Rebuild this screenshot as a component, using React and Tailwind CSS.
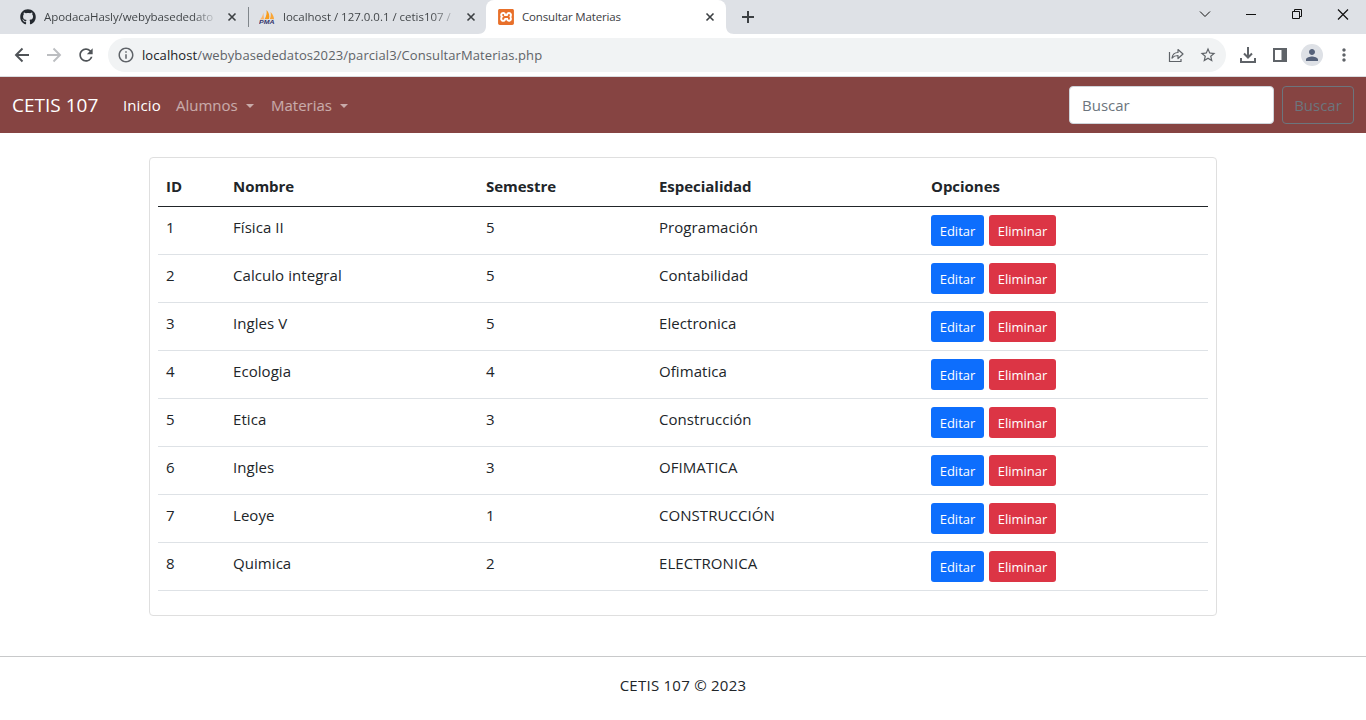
import React from "react";
import { FaGithub } from "react-icons/fa";
import { MdInfoOutline, MdRefresh, MdStarBorder, MdPerson, MdMoreVert } from "react-icons/md";
import { SiXampp } from "react-icons/si";

const rows = [
  ["1", "Física II", "5", "Programación"],
  ["2", "Calculo integral", "5", "Contabilidad"],
  ["3", "Ingles V", "5", "Electronica"],
  ["4", "Ecologia", "4", "Ofimatica"],
  ["5", "Etica", "3", "Construcción"],
  ["6", "Ingles", "3", "OFIMATICA"],
  ["7", "Leoye", "1", "CONSTRUCCIÓN"],
  ["8", "Quimica", "2", "ELECTRONICA"],
];

function CloseX() {
  return (
    <svg className="size-4 shrink-0 text-[#3c4043]" viewBox="0 0 16 16" fill="none" stroke="currentColor" strokeWidth="1.6">
      <path d="M4.5 4.5l7 7M11.5 4.5l-7 7" />
    </svg>
  );
}

function PmaIcon() {
  return (
    <svg className="size-4 shrink-0" viewBox="0 0 16 16">
      <path d="M1 10.5C3 8.500 4 6 4.300 3.500L5 10.300z" fill="#fbb56a" />
      <path d="M5.500 10.300C7.500 7 8 4 7.500 1C10 3.500 11 7 10 10z" fill="#f89c1c" />
      <path d="M10.800 10C12 7.500 12 5 11.500 3C14 5.500 15 8 15 10.300z" fill="#f9a638" />
      <text x="0" y="15.200" fontFamily="Liberation Sans, sans-serif" fontSize="5.500" fontWeight="700" fontStyle="italic" textLength="15.500" lengthAdjust="spacingAndGlyphs" fill="#33336b">PMA</text>
    </svg>
  );
}

function TabStrip() {
  return (
    <div className="flex h-[34px] items-center bg-[#dee1e6] text-[11.500px] text-[#3c4043]">
      <div className="flex w-[248px] items-center pl-5">
        <FaGithub className="size-4 shrink-0 text-[#24292f]" />
        <div className="ml-2 w-[171px] whitespace-nowrap tracking-[-0.080px]">
          <span className="bg-linear-to-r from-[#3c4043] from-88% to-[#3c4043]/20 bg-clip-text text-transparent">ApodacaHasly/webybasededato</span>
        </div>
        <div className="ml-[9px]"><CloseX /></div>
      </div>
      <div className="h-5 w-px shrink-0 bg-[#80868b]" />
      <div className="flex w-[237px] shrink-0 items-center pl-[10px]">
        <PmaIcon />
        <div className="ml-2 w-[170px] whitespace-nowrap tracking-[-0.020px]">
          <span className="bg-linear-to-r from-[#3c4043] from-88% to-[#3c4043]/30 bg-clip-text text-transparent">localhost / 127.0.0.1 / cetis107 /</span>
        </div>
        <div className="ml-[10px]"><CloseX /></div>
      </div>
      <svg className="-ml-2 h-[34px] w-2 shrink-0" viewBox="0 0 8 34"><path d="M8 26v8H0c5 0 8-3 8-8z" fill="#fff" /></svg>
      <div className="flex h-[34px] w-[240px] shrink-0 items-center rounded-t-lg bg-white pl-3">
        <SiXampp className="size-4 shrink-0 text-[#e8702a]" />
        <span className="ml-2 w-[180px] tracking-[-0.150px]">Consultar Materias</span>
        <CloseX />
      </div>
      <svg className="h-[34px] w-2 shrink-0" viewBox="0 0 8 34"><path d="M0 26v8h8c-5 0-8-3-8-8z" fill="#fff" /></svg>
      <svg className="ml-1.5 size-4" viewBox="0 0 16 16" fill="none" stroke="#3c4043" strokeWidth="2"><path d="M8 2v12M2 8h12" /></svg>
      <svg className="ml-auto h-[34px] w-[170px] shrink-0" viewBox="0 0 170 34" fill="none" stroke="#111" strokeWidth="1">
        <path d="M4 11.500l5 5 5-5" />
        <path d="M50 14.500h10" />
        <path d="M96.500 11.500h7v7h-7zM98.500 11.500v-2h7v7h-2" />
        <path d="M142 9.500l10 10M152 9.500l-10 10" strokeWidth="1.200" />
      </svg>
    </div>
  );
}

function AddressBar() {
  return (
    <div className="flex h-[43px] items-center border-b border-[#dadce0] bg-white text-[#5f6368]">
      <svg className="ml-3 size-5 text-[#4f5357]" viewBox="0 0 20 20" fill="none" stroke="currentColor" strokeWidth="1.900">
        <path d="M17 10H4.500M10.500 3.500L4 10l6.500 6.500" />
      </svg>
      <svg className="ml-3 size-5 text-[#bcbec1]" viewBox="0 0 20 20" fill="none" stroke="currentColor" strokeWidth="1.900">
        <path d="M3 10h12.500M9.500 3.500L16 10l-6.500 6.500" />
      </svg>
      <MdRefresh className="ml-3 size-5 text-[#4f5357]" />
      <div className="ml-3 flex h-[34px] w-[1118px] items-center rounded-full bg-[#f1f3f4] pl-[9px]">
        <MdInfoOutline className="size-[18px]" />
        <span className="ml-[7px] pt-px text-[13px] tracking-[0.090px]">
          <span className="text-[#202124]">localhost</span>/webybasededatos2023/parcial3/ConsultarMaterias.php
        </span>
        <svg className="ml-auto size-4" viewBox="0 0 16 16" fill="none" stroke="#5f6368" strokeWidth="1.200">
          <path d="M1.500 5v9.500h11.500V12" />
          <path d="M4 11c.5-3.500 2.500-5.500 6-5.500V2.500l5 4.500-5 4.500V8.500C7.500 8.500 5.500 9.300 4 11z" strokeLinejoin="round" />
        </svg>
        <MdStarBorder className="mr-[9px] ml-[15px] size-[18px]" />
      </div>
      <svg className="ml-[14px] size-4" viewBox="0 0 16 16" fill="none" stroke="#5f6368" strokeWidth="2">
        <path d="M8 0v10M4 6.500l4 4 4-4M1 11v4h14v-4" />
      </svg>
      <svg className="ml-[17px] size-[14px]" viewBox="0 0 14 14" fill="#5f6368"><path d="M0 0h14v14H0zM2 2v10h6.500V2z" fillRule="evenodd" /></svg>
      <span className="ml-[14px] flex size-[22px] items-center justify-center rounded-full bg-[#dee1e6]">
        <MdPerson className="size-[18px] text-[#56627a]" />
      </span>
      <MdMoreVert className="ml-[11px] size-5" />
    </div>
  );
}

function Caret() {
  return <span className="ml-2 inline-block border-x-[4.5px] border-t-[4.5px] border-x-transparent border-t-current align-[3px]" />;
}

function Navbar() {
  return (
    <nav className="flex h-14 items-center bg-[#864442] px-3 text-[15px]">
      <span className="w-[111px] text-[19px] text-white">CETIS 107</span>
      <a className="w-[53px] tracking-[0.100px] text-white">Inicio</a>
      <a className="w-[95px] text-white/55">Alumnos<Caret /></a>
      <a className="text-white/55">Materias<Caret /></a>
      <div className="ml-auto flex h-[38px] w-[205px] items-center rounded-[4px] border border-[#ced4da] bg-white px-3 text-[#6c757d]">Buscar</div>
      <button className="ml-2 h-[38px] w-[72px] rounded-[4px] border border-[#6c757d] text-[#6c757d]">Buscar</button>
    </nav>
  );
}

function SubjectsTable() {
  return (
    <table className="w-full table-fixed border-separate border-spacing-0 text-left">
      <colgroup>
        <col className="w-[67px]" />
        <col className="w-[253px]" />
        <col className="w-[173px]" />
        <col className="w-[272px]" />
        <col />
      </colgroup>
      <thead>
        <tr className="h-[41px] font-bold">
          {["ID", "Nombre", "Semestre", "Especialidad", "Opciones"].map((h) => (
            <th key={h} className="border-b border-[#212529] px-2 py-0 tracking-[-0.030px]">{h}</th>
          ))}
        </tr>
      </thead>
      <tbody>
        {rows.map((r) => (
          <tr key={r[0]} className="h-12">
            {r.map((c, i) => (
              <td key={i} className="border-b border-[#dee2e6] px-2 pt-2 align-top leading-6 tracking-[0.060px]">{c}</td>
            ))}
            <td className="border-b border-[#dee2e6] px-2 pt-2 align-top">
              <div className="flex gap-[5px] text-[13px] text-white">
                <button className="h-[31px] w-[53px] rounded-[3px] bg-[#0d6efd] pt-0.5">Editar</button>
                <button className="h-[31px] w-[67px] rounded-[3px] bg-[#dc3545] pt-0.5">Eliminar</button>
              </div>
            </td>
          </tr>
        ))}
      </tbody>
    </table>
  );
}

export default function App() {
  return (
    <div className="flex h-[720px] w-[1366px] flex-col overflow-hidden bg-white font-['Open_Sans',sans-serif] text-[15px] text-[#212529]">
      <TabStrip />
      <AddressBar />
      <Navbar />
      <main className="mx-auto mt-6 h-[459px] w-[1068px] rounded-[4px] border border-[#dfdfdf] p-2">
        <SubjectsTable />
      </main>
      <footer className="mt-10 border-t border-[#c8c9ca] pt-4 text-center leading-6 tracking-[0.250px]">CETIS 107 © 2023</footer>
    </div>
  );
}
